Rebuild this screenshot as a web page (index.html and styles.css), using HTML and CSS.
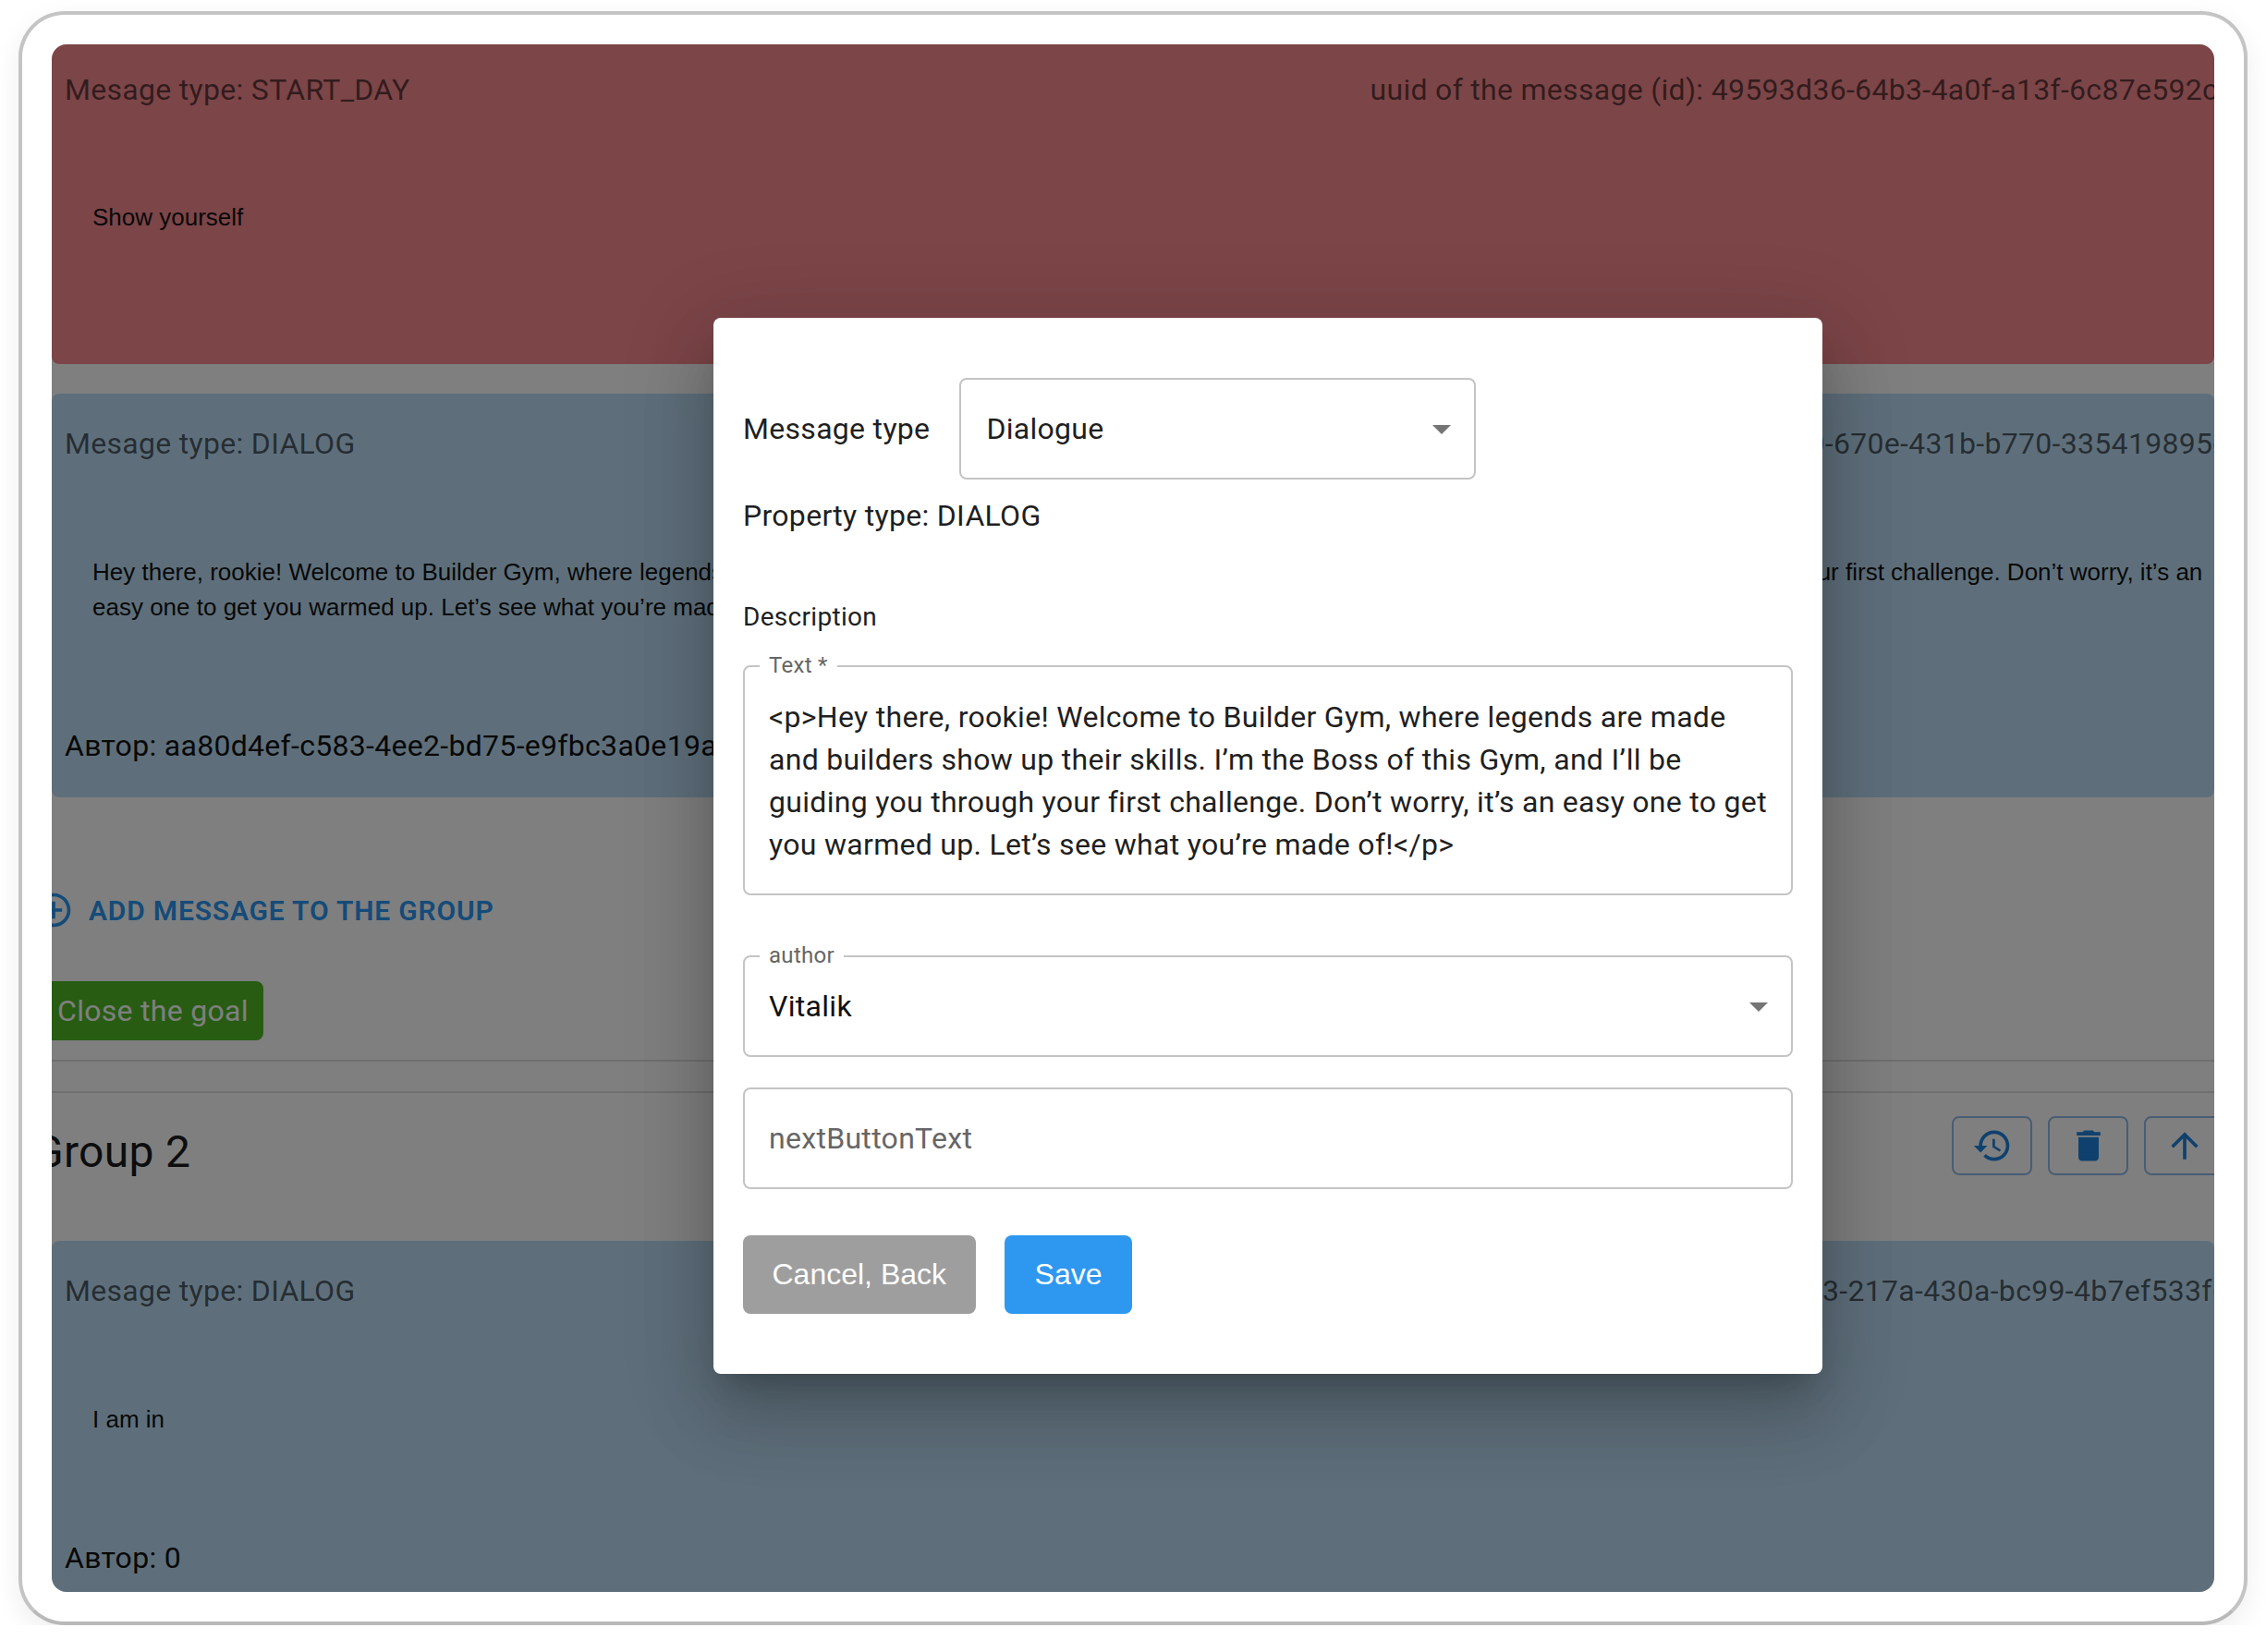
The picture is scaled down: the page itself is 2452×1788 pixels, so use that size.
FILE: index.html
```html
<!DOCTYPE html>
<html lang="en">
<head>
<meta charset="utf-8">
<title>Messages</title>
<link rel="stylesheet" href="styles.css">
</head>
<body>
<div class="frame">
  <div class="viewport">
    <section class="card card-red card-first">
      <header class="card-head"><span>Mesage type: START_DAY</span><span class="uuid">uuid of the message (id): 49593d36-64b3-4a0f-a13f-6c87e592c1e4</span></header>
      <p class="card-body">Show yourself</p>
    </section>
    <section class="card card-blue">
      <header class="card-head"><span>Mesage type: DIALOG</span><span class="uuid">uuid of the message (id): 7c1a52d0-670e-431b-b770-335419895c2d</span></header>
      <p class="card-body">Hey there, rookie! Welcome to Builder Gym, where legends are made and builders show up their skills. I’m the Boss of this Gym, and I’ll be guiding you through your first challenge. Don’t worry, it’s an easy one to get you warmed up. Let’s see what you’re made of!</p>
      <p class="card-author">Автор: aa80d4ef-c583-4ee2-bd75-e9fbc3a0e19a</p>
    </section>
    <button class="add-btn" type="button">
      <svg class="add-icon" viewBox="0 0 24 24"><path d="M13 7h-2v4H7v2h4v4h2v-4h4v-2h-4V7zm-1-5C6.48 2 2 6.48 2 12s4.48 10 10 10 10-4.48 10-10S17.52 2 12 2zm0 18c-4.41 0-8-3.59-8-8s3.59-8 8-8 8 3.59 8 8-3.59 8-8 8z"/></svg>
      <span>Add message to the group</span>
    </button>
    <button class="close-btn" type="button">Close the goal</button>
    <hr class="rule rule-a">
    <hr class="rule rule-b">
    <div class="group-head">
      <h2 class="group-title">Group 2</h2>
      <div class="group-actions">
        <button class="icon-btn" type="button"><svg viewBox="0 0 24 24"><path d="M13 3c-4.97 0-9 4.03-9 9H1l3.89 3.89.07.14L9 12H6c0-3.87 3.13-7 7-7s7 3.13 7 7-3.13 7-7 7c-1.93 0-3.68-.79-4.94-2.06l-1.42 1.42C8.27 19.99 10.51 21 13 21c4.97 0 9-4.03 9-9s-4.03-9-9-9zm-1 5v5l4.28 2.54.72-1.21-3.5-2.08V8H12z"/></svg></button>
        <button class="icon-btn" type="button"><svg viewBox="0 0 24 24"><path d="M6 19c0 1.1.9 2 2 2h8c1.1 0 2-.9 2-2V7H6v12zM19 4h-3.5l-1-1h-5l-1 1H5v2h14V4z"/></svg></button>
        <button class="icon-btn" type="button"><svg viewBox="0 0 24 24"><path d="M4 12l1.41 1.41L11 7.83V20h2V7.83l5.58 5.59L20 12l-8-8-8 8z"/></svg></button>
      </div>
    </div>
    <section class="card card-blue">
      <header class="card-head"><span>Mesage type: DIALOG</span><span class="uuid">uuid of the message (id): 5e0b96a3-217a-430a-bc99-4b7ef533f6a0</span></header>
      <p class="card-body">I am in</p>
      <p class="card-author">Автор: 0</p>
    </section>
    <div class="overlay"></div>
    <div class="modal">
      <div class="type-row">
        <span class="type-label">Message type</span>
        <div class="select type-select"><span>Dialogue</span><svg class="caret" viewBox="0 0 24 24"><path d="M7 10l5 5 5-5z"/></svg></div>
      </div>
      <p class="prop-type">Property type: DIALOG</p>
      <p class="desc-label">Description</p>
      <div class="field text-field">
        <span class="field-label">Text *</span>
        <div class="text-value">&lt;p&gt;Hey there, rookie! Welcome to Builder Gym, where legends are made<br>and builders show up their skills. I’m the Boss of this Gym, and I’ll be<br>guiding you through your first challenge. Don’t worry, it’s an easy one to get<br>you warmed up. Let’s see what you’re made of!&lt;/p&gt;</div>
      </div>
      <div class="field select author-select">
        <span class="field-label">author</span>
        <span>Vitalik</span><svg class="caret" viewBox="0 0 24 24"><path d="M7 10l5 5 5-5z"/></svg>
      </div>
      <div class="field next-field"><span class="placeholder">nextButtonText</span></div>
      <div class="modal-actions">
        <button class="act-btn act-cancel" type="button">Cancel, Back</button>
        <button class="act-btn act-save" type="button">Save</button>
      </div>
    </div>
  </div>
</div>
</body>
</html>
```
FILE: styles.css
```css
* { box-sizing: border-box; }
html, body { margin: 0; background: #fff; }
body { font-family: Roboto, "Noto Sans", sans-serif; color: #1f1f1f; letter-spacing: .3px; }
p, h2 { margin: 0; }
button { font-family: inherit; letter-spacing: inherit; cursor: pointer; }

.frame {
  width: 2412px;
  height: 1747px;
  margin: 12px 0 0 20px;
  padding: 32px 32px 32px;
  background: #fff;
  border: 4px solid #c4c4c4;
  border-bottom-color: #b9b9b9;
  border-radius: 50px;
  box-shadow: 0 10px 30px rgba(0, 0, 0, .07);
}
.viewport {
  position: relative;
  height: 100%;
  overflow: hidden;
  border-radius: 16px;
  background: #fff;
}

.card {
  padding: 32px 0 34px 14px;
  overflow: hidden;
  border-radius: 8px;
}
.card + .card { margin-top: 32px; }
.card-red { background: #f98b91; }
.card-blue { background: #bcdff7; }
.card-first { padding-top: 27px; padding-bottom: 31px; }
.card-head {
  display: flex;
  justify-content: space-between;
  height: 44px;
  align-items: center;
  font-size: 32px;
  white-space: nowrap;
  color: rgba(0, 0, 0, .6);
}
.uuid { margin-right: -58px; }
.card-blue .uuid { margin-right: -52px; }
.card-body {
  margin: 98px 0 109px;
  padding-left: 30px;
  padding-right: 10px;
  font: 26px/38px "Liberation Sans", Arial, sans-serif;
  letter-spacing: 0;
  color: #111;
}
.card-first .card-body { margin-top: 97px; }
.card-author { height: 44px; line-height: 44px; font-size: 32px; white-space: nowrap; color: #111; }

.add-btn {
  display: flex;
  align-items: center;
  gap: 16px;
  height: 60px;
  margin: 92px 0 0 -20px;
  padding: 0;
  border: 0;
  background: none;
  color: #2b96f0;
  font-size: 30px;
  font-weight: 600;
  letter-spacing: .82px;
  text-transform: uppercase;
}
.add-icon { width: 44px; height: 44px; fill: currentColor; }
.close-btn {
  display: block;
  height: 64px;
  margin: 47px 0 0 -11px;
  padding: 0 16px 0 17px;
  border: 0;
  border-radius: 8px;
  background: #4eb824;
  color: #fff;
  font-size: 32px;
}
.rule { height: 2px; margin: 0; border: 0; background: #dedede; }
.rule-a { margin-top: 21px; }
.rule-b { margin-top: 32px; }

.group-head {
  display: flex;
  justify-content: space-between;
  align-items: flex-start;
  margin: 25px -11px 64px -20px;
}
.group-title { margin-top: 7px; font-size: 48px; font-weight: 400; line-height: 64px; color: #1a1a1a; }
.group-actions { display: flex; gap: 17px; }
.icon-btn {
  display: flex;
  align-items: center;
  justify-content: center;
  width: 87px;
  height: 64px;
  padding: 0;
  border: 2px solid #90bae8;
  border-radius: 8px;
  background: none;
}
.icon-btn svg { width: 44px; height: 44px; fill: #2083dc; }

.overlay { position: absolute; inset: 0; background: rgba(0, 0, 0, .5); }
.modal {
  position: absolute;
  left: 716px;
  top: 296px;
  width: 1200px;
  height: 1143px;
  padding: 65px 32px;
  border-radius: 8px;
  background: #fff;
  box-shadow: 0 22px 30px -14px rgba(0, 0, 0, .2), 0 48px 76px 6px rgba(0, 0, 0, .14), 0 18px 92px 16px rgba(0, 0, 0, .12);
  font-size: 32px;
  color: #1f1f1f;
}
.type-row { display: flex; align-items: center; gap: 32px; }
.type-label { white-space: nowrap; }
.select {
  display: flex;
  align-items: center;
  justify-content: space-between;
  padding: 0 11px 0 27px;
  border: 2px solid #c4c4c4;
  border-radius: 8px;
}
.type-select { width: 559px; height: 110px; }
.caret { width: 48px; height: 48px; fill: #757575; }
.prop-type { margin-top: 17px; line-height: 44px; }
.desc-label { margin-top: 68px; font-size: 28px; line-height: 40px; }
.field { position: relative; border: 2px solid #c4c4c4; border-radius: 8px; }
.field-label {
  position: absolute;
  left: 16px;
  top: -15px;
  padding: 0 10px;
  background: #fff;
  font-size: 24px;
  line-height: 26px;
  color: #666;
}
.text-field { height: 249px; margin-top: 32px; padding: 31px 26px; }
.text-value { line-height: 46px; white-space: nowrap; }
.author-select { height: 110px; margin-top: 65px; padding-left: 26px; color: #111; }
.next-field { display: flex; align-items: center; height: 110px; margin-top: 33px; padding: 0 26px; }
.placeholder { color: #666; }
.modal-actions { display: flex; gap: 31px; margin-top: 50px; }
.act-btn {
  height: 85px;
  padding: 0 31.5px;
  border: 0;
  border-radius: 8px;
  color: #fff;
  font-family: "Liberation Sans", Arial, sans-serif;
  font-size: 32px;
  letter-spacing: 0;
}
.act-cancel { background: #9e9e9e; }
.act-save { padding: 0 33px; background: #2e98f0; }
```
